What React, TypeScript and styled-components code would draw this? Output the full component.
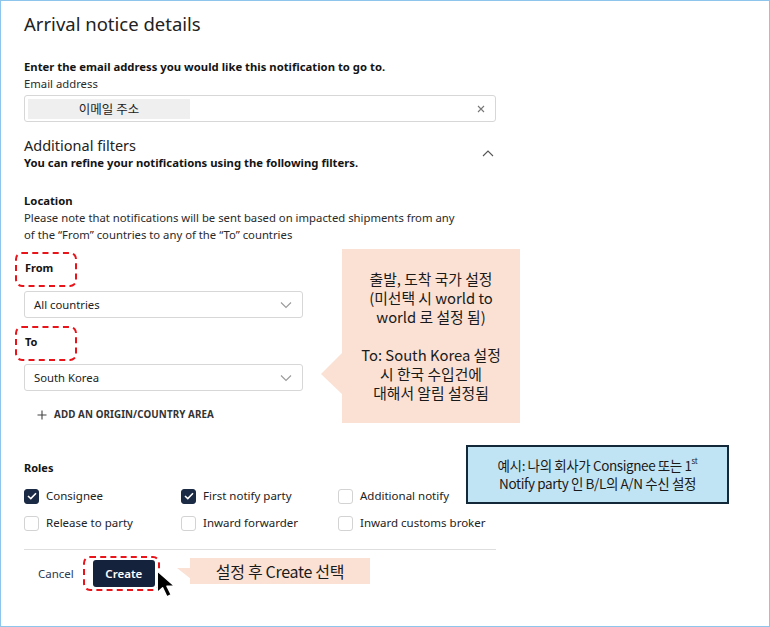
import styled, { createGlobalStyle } from "styled-components";

const GlobalStyle = createGlobalStyle`
  * { box-sizing: border-box; }
  body {
    margin: 0;
    background: #ffffff;
    font-family: "Noto Sans", "Open Sans", "Noto Sans CJK KR", sans-serif;
    color: #1a1a1a;
  }
`;

const Frame = styled.div`
  position: relative;
  width: 770px;
  height: 627px;
  border: 1px solid #8ec5ec;
  overflow: hidden;
  background: #fff;
`;

const Form = styled.div`
  width: 496px;
  padding: 11px 0 0 23px;
  display: flex;
  flex-direction: column;
`;

const Title = styled.h1`
  margin: 0;
  font-size: 18.5px;
  line-height: 24px;
  font-weight: 400;
  color: #222;
`;

const Strong = styled.div<{ $mt?: number }>`
  margin-top: ${p => p.$mt ?? 0}px;
  font-size: 11.3px;
  line-height: 16px;
  font-weight: 700;
  color: #141414;
`;

const Text = styled.div`
  font-size: 11.3px;
  line-height: 17px;
  color: #2a2a2a;
`;

const Field = styled.div<{ $width?: number; $mt?: number }>`
  margin-top: ${p => p.$mt ?? 0}px;
  width: ${p => p.$width ?? 472}px;
  height: 27px;
  border: 1px solid #d7d7d7;
  border-radius: 3px;
  display: flex;
  align-items: center;
  justify-content: space-between;
  padding: 0 10px 0 3px;
  font-size: 11.3px;
  color: #222;
`;

const Placeholder = styled.span`
  width: 162px;
  height: 20px;
  background: #efefef;
  display: flex;
  align-items: center;
  justify-content: center;
  font-family: "Noto Sans CJK KR", sans-serif;
  font-size: 12.5px;
  color: #222;
`;

const SelectText = styled.span`
  padding-left: 6px;
`;

const SectionHead = styled.div`
  margin-top: 13px;
  display: flex;
  align-items: center;
  justify-content: space-between;
  padding-right: 3px;
`;

const SubTitle = styled.div`
  font-size: 14.5px;
  line-height: 20px;
  color: #222;
`;

const Label = styled.div<{ $mt?: number }>`
  margin-top: ${p => p.$mt ?? 0}px;
  margin-left: -7px;
  align-self: flex-start;
  width: 58px;
  height: 31px;
  padding: 6px 0 0 8px;
  font-size: 11px;
  line-height: 16px;
  font-weight: 700;
  color: #141414;
  outline: 2px dashed #e8141a;
  border-radius: 5px;
`;

const AddLink = styled.div`
  margin-top: 17px;
  margin-left: 13px;
  display: flex;
  align-items: center;
  gap: 7px;
  font-size: 9.8px;
  font-weight: 700;
  color: #333;
  letter-spacing: 0.1px;
`;

const RolesTitle = styled(Strong)`
  font-size: 11px;
`;

const RoleGrid = styled.div`
  margin-top: 12px;
  display: grid;
  grid-template-columns: 157px 157px 160px;
  row-gap: 11px;
`;

const Role = styled.label`
  display: flex;
  align-items: center;
  gap: 7px;
  font-size: 11.5px;
  line-height: 16px;
  color: #222;
  white-space: nowrap;
`;

const Box = styled.span<{ $checked?: boolean }>`
  width: 15px;
  height: 15px;
  border-radius: 3px;
  border: 1px solid ${p => (p.$checked ? "#1b2a45" : "#d3d3d3")};
  background: ${p => (p.$checked ? "#1b2a45" : "#fff")};
  display: flex;
  align-items: center;
  justify-content: center;
`;

const Divider = styled.hr`
  margin: 18px 0 0;
  width: 472px;
  border: none;
  border-top: 1px solid #dedede;
`;

const Actions = styled.div`
  margin-top: 8px;
  display: flex;
  align-items: center;
  padding-left: 14px;
  gap: 20px;
`;

const Cancel = styled.span`
  font-size: 11.5px;
  color: #2b3a55;
`;

const CreateWrap = styled.span`
  outline: 2px dashed #e8141a;
  border-radius: 5px;
  padding: 2px 3px 2px 8px;
  margin-left: -9px;
  display: flex;
`;

const CreateButton = styled.button`
  height: 27px;
  width: 62px;
  border: none;
  border-radius: 3px;
  background: #15223b;
  color: #fff;
  font-family: inherit;
  font-size: 11.5px;
  font-weight: 600;
`;

const Callout = styled.div`
  position: absolute;
  left: 341px;
  top: 248px;
  width: 178px;
  height: 174px;
  background: #fbe1d4;
  padding-top: 20px;
  font-family: "Noto Sans CJK KR", "Noto Sans", sans-serif;
  font-size: 14.8px;
  line-height: 19px;
  color: #1a1a1a;
  text-align: center;
  &::before {
    content: "";
    position: absolute;
    left: -21px;
    top: 103px;
    border-style: solid;
    border-width: 22px 22px 21px 0;
    border-color: transparent #fbe1d4 transparent transparent;
  }
`;

const Gap = styled.div`
  height: 19px;
`;

const Note = styled.div`
  position: absolute;
  left: 465px;
  top: 444px;
  width: 263px;
  height: 59px;
  background: #c1e4f4;
  border: 2px solid #13293a;
  display: flex;
  flex-direction: column;
  align-items: center;
  justify-content: center;
  gap: 1px;
  font-family: "Noto Sans CJK KR", "Noto Sans", sans-serif;
  font-size: 13.5px;
  letter-spacing: -0.4px;
  line-height: 17px;
  color: #1a1a1a;
`;

const Sup = styled.span`
  font-size: 8px;
  line-height: 8px;
  vertical-align: top;
`;

const Tag = styled.div`
  position: absolute;
  left: 189px;
  top: 557px;
  width: 180px;
  height: 26px;
  background: #fbe1d4;
  display: flex;
  align-items: center;
  justify-content: center;
  font-family: "Noto Sans CJK KR", "Noto Sans", sans-serif;
  font-size: 16px;
  letter-spacing: -0.3px;
  color: #1a1a1a;
  &::before {
    content: "";
    position: absolute;
    left: -13px;
    top: 10px;
    border-style: solid;
    border-width: 0 14px 11px 0;
    border-color: transparent #fbe1d4 transparent transparent;
  }
`;

const Pointer = styled.svg`
  position: absolute;
  left: 154px;
  top: 569px;
`;

const Chevron = ({ up }: { up?: boolean }) => (
  <svg width="12" height="8" viewBox="0 0 12 8">
    <path d={up ? "M1 7 L6 2 L11 7" : "M1 1.5 L6 6.5 L11 1.5"} fill="none" stroke={up ? "#555" : "#9a9a9a"} strokeWidth="1.1" />
  </svg>
);

const Check = () => (
  <svg width="10" height="8" viewBox="0 0 10 8">
    <path d="M1 4 L3.8 6.6 L9 1.2" fill="none" stroke="#fff" strokeWidth="1.6" />
  </svg>
);

const roles = [
  { name: "Consignee", checked: true },
  { name: "First notify party", checked: true },
  { name: "Additional notify", checked: false },
  { name: "Release to party", checked: false },
  { name: "Inward forwarder", checked: false },
  { name: "Inward customs broker", checked: false },
];

export default function App() {
  return (
    <Frame>
      <GlobalStyle />
      <Form>
        <Title>Arrival notice details</Title>
        <Strong $mt={23}>Enter the email address you would like this notification to go to.</Strong>
        <Text>Email address</Text>
        <Field $mt={3}>
          <Placeholder>이메일 주소</Placeholder>
          <svg width="8" height="8" viewBox="0 0 8 8">
            <path d="M1 1 L7 7 M7 1 L1 7" stroke="#777" strokeWidth="1.1" />
          </svg>
        </Field>
        <SectionHead>
          <div>
            <SubTitle>Additional filters</SubTitle>
            <Strong>You can refine your notifications using the following filters.</Strong>
          </div>
          <Chevron up />
        </SectionHead>
        <Strong $mt={22}>Location</Strong>
        <Text>
          Please note that notifications will be sent based on impacted shipments from any
          <br />
          of the “From” countries to any of the “To” countries
        </Text>
        <Label $mt={11}>From</Label>
        <Field $width={279} $mt={6}>
          <SelectText>All countries</SelectText>
          <Chevron />
        </Field>
        <Label $mt={10}>To</Label>
        <Field $width={279} $mt={5}>
          <SelectText>South Korea</SelectText>
          <Chevron />
        </Field>
        <AddLink>
          <svg width="10" height="10" viewBox="0 0 10 10">
            <path d="M5 0.5 V9.5 M0.5 5 H9.5" stroke="#444" strokeWidth="1.1" />
          </svg>
          ADD AN ORIGIN/COUNTRY AREA
        </AddLink>
        <RolesTitle $mt={39}>Roles</RolesTitle>
        <RoleGrid>
          {roles.map(r => (
            <Role key={r.name}>
              <Box $checked={r.checked}>{r.checked && <Check />}</Box>
              {r.name}
            </Role>
          ))}
        </RoleGrid>
        <Divider />
        <Actions>
          <Cancel>Cancel</Cancel>
          <CreateWrap>
            <CreateButton>Create</CreateButton>
          </CreateWrap>
        </Actions>
      </Form>

      <Callout>
        출발, 도착 국가 설정
        <br />
        (미선택 시 world to
        <br />
        world 로 설정 됨)
        <Gap />
        To: South Korea 설정
        <br />시 한국 수입건에
        <br />
        대해서 알림 설정됨
      </Callout>

      <Note>
        <div>
          예시: 나의 회사가 Consignee 또는 1<Sup>st</Sup>
        </div>
        <div>Notify party 인 B/L의 A/N 수신 설정</div>
      </Note>

      <Pointer width="26" height="30" viewBox="0 0 24 28">
        <path d="M2 1 L2 21 L7 16.5 L11 25 L15 23 L11 15 L18 15 Z" fill="#000" stroke="#fff" strokeWidth="1.3" strokeLinejoin="round" />
      </Pointer>
      <Tag>설정 후 Create 선택</Tag>
    </Frame>
  );
}
